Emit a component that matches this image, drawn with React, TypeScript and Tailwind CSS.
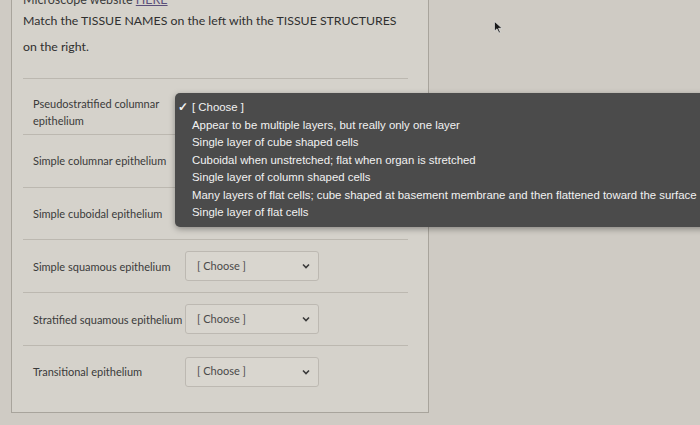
import React from "react";

const rows = [
  { label: ["Pseudostratified columnar", "epithelium"], h: "h-[56px]", pad: "mt-[10px]" },
  { label: ["Simple columnar epithelium"], h: "h-[53px]", pad: "-mt-[2px]" },
  { label: ["Simple cuboidal epithelium"], h: "h-[52px]", pad: "" },
  { label: ["Simple squamous epithelium"], h: "h-[53px]", pad: "" },
  { label: ["Stratified squamous epithelium"], h: "h-[53px]", pad: "" },
  { label: ["Transitional epithelium"], h: "h-[52px]", pad: "" },
];

const options = [
  "Appear to be multiple layers, but really only one layer",
  "Single layer of cube shaped cells",
  "Cuboidal when unstretched; flat when organ is stretched",
  "Single layer of column shaped cells",
  "Many layers of flat cells; cube shaped at basement membrane and then flattened toward the surface",
  "Single layer of flat cells",
];

function Chevron() {
  return (
    <svg width="8" height="6" viewBox="0 0 8 6" className="text-[#3a3a3a]">
      <path d="M1 1.5 L4 4.5 L7 1.5" fill="none" stroke="currentColor" strokeWidth="1.6" />
    </svg>
  );
}

function Select() {
  return (
    <div className="flex h-[30px] w-[134px] items-center justify-between rounded-[3px] border border-[#bdb9b2] bg-[#d9d6cf] pl-[11px] pr-[8px] text-[11px] text-[#4a4a4a]">
      <span>[ Choose ]</span>
      <Chevron />
    </div>
  );
}

export default function App() {
  return (
    <div
      className="relative h-[425px] w-[700px] overflow-hidden bg-[#cfcbc4]"
      style={{ fontFamily: "Lato, 'Open Sans', sans-serif" }}
    >
      <div className="ml-[11px] w-[418px] border-x border-b border-[#a8a49c] bg-[#d5d2cb] pb-[15px]">
        <div className="-mt-[7px] pl-[11px] text-[12.5px] leading-[14px] text-[#3c3c3c]">
          Microscope website <span className="text-[#5a4f7a] underline">HERE</span>
        </div>
        <p className="mt-[1px] pl-[11px] pr-[20px] text-[12.3px] leading-[26px] text-[#2f2f2f]">
          Match the TISSUE NAMES on the left with the TISSUE STRUCTURES on the right.
        </p>
        <div className="ml-[11px] mr-[20px] mt-[18px]">
          {rows.map((r, i) => (
            <div
              key={i}
              className={`flex items-center border-t border-[#bcb8b0] ${r.h}`}
            >
              <div className={`w-[162px] pl-[10px] text-[11px] leading-[17px] text-[#3a3a3a] ${r.pad}`}>
                {r.label.map((l) => (
                  <div key={l}>{l}</div>
                ))}
              </div>
              {i > 2 && <Select />}
            </div>
          ))}
        </div>
      </div>

      {/* open native select menu */}
      <div
        className="absolute left-[175px] top-[93px] w-[560px] rounded-[5px] bg-[#4b4b4b] pb-[5px] pt-[6px] text-[11.4px] leading-[17.5px] text-[#f2f2f2] shadow-[0_2px_6px_rgba(0,0,0,0.35)]"
        style={{ fontFamily: "'Liberation Sans', Arial, sans-serif" }}
      >
        <div className="relative pl-[17px]">
          <span className="absolute left-[3px] top-0 text-[11.5px] font-bold">✓</span>
          [ Choose ]
        </div>
        {options.map((o) => (
          <div key={o} className="whitespace-nowrap pl-[17px]">
            {o}
          </div>
        ))}
      </div>

      {/* mouse pointer */}
      <svg
        className="absolute left-[494px] top-[21px]"
        width="9"
        height="13"
        viewBox="0 0 9 13"
      >
        <path d="M0.5 0.5 L0.5 10 L3 7.8 L5 12 L6.4 11.3 L4.5 7.3 L8 7.3 Z" fill="#1a1a1a" stroke="#f2f2f2" strokeWidth="0.6" />
      </svg>
    </div>
  );
}
